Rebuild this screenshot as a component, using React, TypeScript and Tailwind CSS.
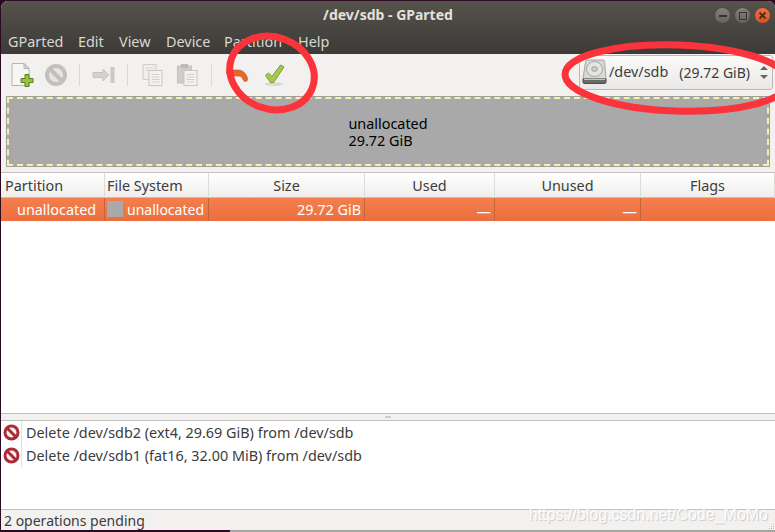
import React from "react";

const menus = [
  { label: "GParted", width: "w-[70px]" },
  { label: "Edit", width: "w-[41px]" },
  { label: "View", width: "w-[47px]" },
  { label: "Device", width: "w-[58px]" },
  { label: "Partition", width: "w-[74px]" },
  { label: "Help", width: "w-[40px]" },
];

const columns = [
  { label: "Partition", align: "text-left pl-[3px]" },
  { label: "File System", align: "text-left pl-[2px]" },
  { label: "Size", align: "text-center" },
  { label: "Used", align: "text-center" },
  { label: "Unused", align: "text-center" },
  { label: "Flags", align: "text-center" },
];

const operations = [
  "Delete /dev/sdb2 (ext4, 29.69 GiB) from /dev/sdb",
  "Delete /dev/sdb1 (fat16, 32.00 MiB) from /dev/sdb",
];

function NewIcon() {
  return (
    <svg width="24" height="24" viewBox="0 0 24 24">
      <path d="M2 .5h12l5 5v17H2z" fill="#f6f6f4" stroke="#b4b4b0" />
      <path d="M14 .5v5h5z" fill="#d8d8d4" stroke="#b4b4b0" />
      <path d="M15 11.500h4v4h4v4h-4v4h-4v-4h-4v-4h4z" fill="#9cc044" stroke="#55801c" />
    </svg>
  );
}

function StopIcon({ big }: { big?: boolean }) {
  if (big) {
    return (
      <svg width="24" height="24" viewBox="0 0 24 24">
        <circle cx="12" cy="12" r="9" fill="#e6e5e3" stroke="#c2c0be" strokeWidth="4" />
        <path d="M5.500 5.500l13 13" stroke="#c2c0be" strokeWidth="4" />
      </svg>
    );
  }
  return (
    <svg width="17" height="17" viewBox="0 0 17 17">
      <circle cx="8.500" cy="8.500" r="6.500" fill="#f6f0ee" stroke="#ab2c38" strokeWidth="3" />
      <path d="M4 4l9 9" stroke="#ab2c38" strokeWidth="3" />
    </svg>
  );
}

function ResizeIcon() {
  return (
    <svg width="24" height="24" viewBox="0 0 24 24">
      <path d="M1 9.500h10V6l6 6-6 6v-3.500H1z" fill="#d4d2d0" stroke="#c6c4c2" />
      <rect x="18.500" y="4" width="4" height="16" fill="#cac8c6" />
    </svg>
  );
}

function CopyIcon() {
  return (
    <svg width="24" height="24" viewBox="0 0 24 24">
      <rect x="2" y="1.500" width="13" height="15" fill="#efeeec" stroke="#cfcdcb" />
      <path d="M4.500 5h8M4.500 7.500h8" stroke="#dad8d6" />
      <rect x="8" y="7.500" width="13" height="15" fill="#f4f3f1" stroke="#c8c6c4" />
      <path d="M10.500 11.500h8M10.500 14h8M10.500 16.500h8M10.500 19h8" stroke="#d2d0ce" />
    </svg>
  );
}

function PasteIcon() {
  return (
    <svg width="24" height="24" viewBox="0 0 24 24">
      <rect x="1.500" y="3" width="14" height="17" fill="#cfcdcb" stroke="#c4c2c0" />
      <rect x="5" y="1" width="7" height="4" fill="#bcbab8" />
      <rect x="8" y="7.500" width="13" height="15" fill="#f4f3f1" stroke="#c8c6c4" />
      <path d="M10.500 11.500h8M10.500 14h8M10.500 16.500h8M10.500 19h8" stroke="#d2d0ce" />
    </svg>
  );
}

function UndoIcon() {
  return (
    <svg width="24" height="24" viewBox="0 0 24 24">
      <path d="M1 9l6-5v3h6c4.500 0 8 3 9.500 8 .6 2-.6 3.500-2 3.500-1.300 0-2-.8-2.500-2-.8-2.500-2.500-3.500-5-3.500H7v3z" fill="#df6a2c" stroke="#c2531c" strokeWidth="0.600" />
    </svg>
  );
}

function ApplyIcon() {
  return (
    <svg width="24" height="24" viewBox="0 0 24 24">
      <ellipse cx="11" cy="21" rx="9" ry="1.800" fill="#d8d7d5" />
      <path d="M2.500 12.500l3-2.500 3.500 3.500L17.500 2l3.500 2L10.500 19.500H7.500z" fill="#a8c850" stroke="#749e26" />
    </svg>
  );
}

function DiskIcon() {
  return (
    <svg width="25" height="26" viewBox="0 0 25 26">
      <path d="M5 1h16q1.500 0 1.600 1.500L24 20H1L3.500 2.500Q3.700 1 5 1z" fill="#d8d8d6" stroke="#a6a6a4" />
      <ellipse cx="12.500" cy="10" rx="8" ry="7.500" fill="#e4e4e2" stroke="#a4a4a2" />
      <ellipse cx="12.500" cy="10" rx="2.800" ry="2.300" fill="#d2d2d0" stroke="#989896" />
      <path d="M1 20h23v3q0 1.500-1.500 1.500h-20Q1 24.500 1 23z" fill="#6a6a68" stroke="#4c4c4a" />
      <path d="M2 20.500h21" stroke="#c4c4c2" />
    </svg>
  );
}

function Separator() {
  return <div className="h-[22px] w-px bg-[#dcdad8]" />;
}

export default function App() {
  return (
    <div className="relative h-[532px] w-[775px] overflow-hidden bg-[#2c0a22] pb-[2px] pl-[1px] pt-[1px] font-['Noto_Sans',sans-serif] text-[14.4px] text-[#3c3c3c]">
      <div className="flex h-full flex-col overflow-hidden rounded-t-[7px] bg-[#f2f1f0]">
        {/* Title bar and menu */}
        <div className="bg-gradient-to-b from-[#56524c] to-[#3c3b37]">
          <div className="relative flex h-[27px] items-center justify-center text-[14px] font-bold text-[#e4e2dc]">
            /dev/sdb - GParted
            <div className="absolute right-[4px] top-[6px] flex gap-[3px]">
              <div className="flex h-[17px] w-[17px] items-center justify-center rounded-full border border-[#4a4844] bg-gradient-to-b from-[#85817a] to-[#65625c]">
                <div className="h-[2px] w-[8px] bg-[#35332f]" />
              </div>
              <div className="flex h-[17px] w-[17px] items-center justify-center rounded-full border border-[#4a4844] bg-gradient-to-b from-[#85817a] to-[#65625c]">
                <div className="h-[8px] w-[8px] border border-[#35332f]" />
              </div>
              <div className="flex h-[17px] w-[17px] items-center justify-center rounded-full border border-[#4a4844] bg-gradient-to-b from-[#f07040] to-[#dc5020]">
                <svg width="9" height="9" viewBox="0 0 9 9">
                  <path d="M1.500 1.500l6 6M7.500 1.500l-6 6" stroke="#4a2a1c" strokeWidth="1.800" />
                </svg>
              </div>
            </div>
          </div>
          <div className="flex h-[26px] items-center pl-[7px] pt-[2px] text-[#dad7d0]">
            {menus.map((m) => (
              <span key={m.label} className={m.width}>{m.label}</span>
            ))}
          </div>
        </div>

        {/* Toolbar */}
        <div className="flex h-[42px] items-center justify-between pl-[9px] pr-[2px]">
          <div className="flex items-center">
            <NewIcon />
            <div className="ml-[10px]"><StopIcon big /></div>
            <div className="ml-[11px]"><Separator /></div>
            <div className="ml-[12px]"><ResizeIcon /></div>
            <div className="ml-[11px]"><Separator /></div>
            <div className="ml-[13px]"><CopyIcon /></div>
            <div className="ml-[11px]"><PasteIcon /></div>
            <div className="ml-[11px]"><Separator /></div>
            <div className="ml-[13px]"><UndoIcon /></div>
            <div className="ml-[14px]"><ApplyIcon /></div>
          </div>
          <div className="mb-[6px] flex h-[35px] w-[194px] items-center rounded-[3px] border border-[#bcbab8] bg-gradient-to-b from-[#fbfbfa] to-[#e9e8e6] pl-[2px]">
            <DiskIcon />
            <span className="ml-[2px]">/dev/sdb</span>
            <span className="ml-[11px] text-[14px]">(29.72 GiB)</span>
            <div className="ml-auto mr-[4px] flex flex-col gap-[5px]">
              <div className="h-0 w-0 border-x-[4px] border-b-[4px] border-x-transparent border-b-[#666]" />
              <div className="h-0 w-0 border-x-[4px] border-t-[4px] border-x-transparent border-t-[#666]" />
            </div>
          </div>
        </div>

        {/* Disk graph */}
        <div className="px-[5px]">
          <div className="border border-[#9e9e9e]">
            <div className="flex h-[69px] items-center justify-center border-2 border-dashed border-[#f6f2a6] bg-[#a9a9a9] leading-[17px] text-black">
              <div>
                <div>unallocated</div>
                <div>29.72 GiB</div>
              </div>
            </div>
          </div>
        </div>

        {/* Partition table */}
        <div className="mt-[5px] grid h-[26px] grid-cols-[103px_104px_156px_130px_146px_1fr] border-y border-[#c4c2c0] bg-gradient-to-b from-white to-[#efeeec] pl-[1px]">
          {columns.map((c) => (
            <div key={c.label} className={`border-r border-[#dedcda] leading-[26px] ${c.align}`}>
              {c.label}
            </div>
          ))}
        </div>
        <div className="grid h-[23px] grid-cols-[103px_104px_156px_130px_146px_1fr] bg-gradient-to-b from-[#f47e4e] to-[#ec6f3e] pl-[1px] leading-[23px] text-white">
          <div className="border-r border-[#c4643a] pl-[15px]">unallocated</div>
          <div className="flex items-start border-r border-[#c4643a] pl-[2px]">
            <div className="mr-[4px] mt-[3px] h-[16px] w-[16px] bg-[#a9a9a9]" />
            <span className="text-[14px]">unallocated</span>
          </div>
          <div className="border-r border-[#c4643a] pr-[3px] text-right">29.72 GiB</div>
          <div className="border-r border-[#c4643a] pr-[3px] pt-[2px] text-right">—</div>
          <div className="border-r border-[#c4643a] pr-[3px] pt-[2px] text-right">—</div>
          <div />
        </div>
        <div className="flex-1 bg-white" />

        {/* Pane handle */}
        <div className="flex h-[8px] items-center justify-center border-y border-[#c4c2c0] bg-[#f2f1f0]">
          <div className="h-[2px] w-[6px] bg-[#cfcdcb]" />
        </div>

        {/* Pending operations */}
        <div className="flex h-[88px] flex-col bg-white">
          {operations.map((op) => (
            <div key={op} className="flex h-[23px] items-center">
              <div className="flex h-full w-[21px] items-center justify-center border-r border-[#e0dedc]">
                <StopIcon />
              </div>
              <span className="ml-[4px]">{op}</span>
            </div>
          ))}
        </div>

        {/* Status bar */}
        <div className="relative flex h-[21px] items-center border-t border-[#c4c2c0] pl-[3px] text-[14px]">
          2 operations pending
          <div className="absolute bottom-[1px] right-[1px] grid grid-cols-3 gap-[1px]">
            <span className="col-start-3 h-px w-px bg-[#bbb]" />
            <span className="col-start-2 h-px w-px bg-[#bbb]" />
            <span className="h-px w-px bg-[#bbb]" />
            <span className="h-px w-px bg-[#bbb]" />
            <span className="h-px w-px bg-[#bbb]" />
            <span className="h-px w-px bg-[#bbb]" />
          </div>
        </div>
      </div>

      {/* Lower window edge, lighter where the desktop behind it changes */}
      <div className="absolute bottom-0 left-[230px] right-0 h-[2px] bg-[#a4a4a2]" />

      {/* Red hand-drawn annotations */}
      <svg className="pointer-events-none absolute left-0 top-0" width="775" height="532">
        <ellipse cx="272" cy="73" rx="43" ry="36" fill="none" stroke="#fb343c" strokeWidth="7" transform="rotate(20 272 73)" />
        <ellipse cx="677" cy="78" rx="112" ry="33" fill="none" stroke="#fb343c" strokeWidth="7" transform="rotate(2 677 78)" />
      </svg>

      {/* Watermark */}
      <div className="absolute bottom-[8px] right-[7px] font-['Liberation_Sans',sans-serif] text-[16px] leading-[18px] text-white/90 [text-shadow:1px_1px_1px_#c8c8c8]">
        https://blog.csdn.net/Code_MoMo
      </div>
    </div>
  );
}
